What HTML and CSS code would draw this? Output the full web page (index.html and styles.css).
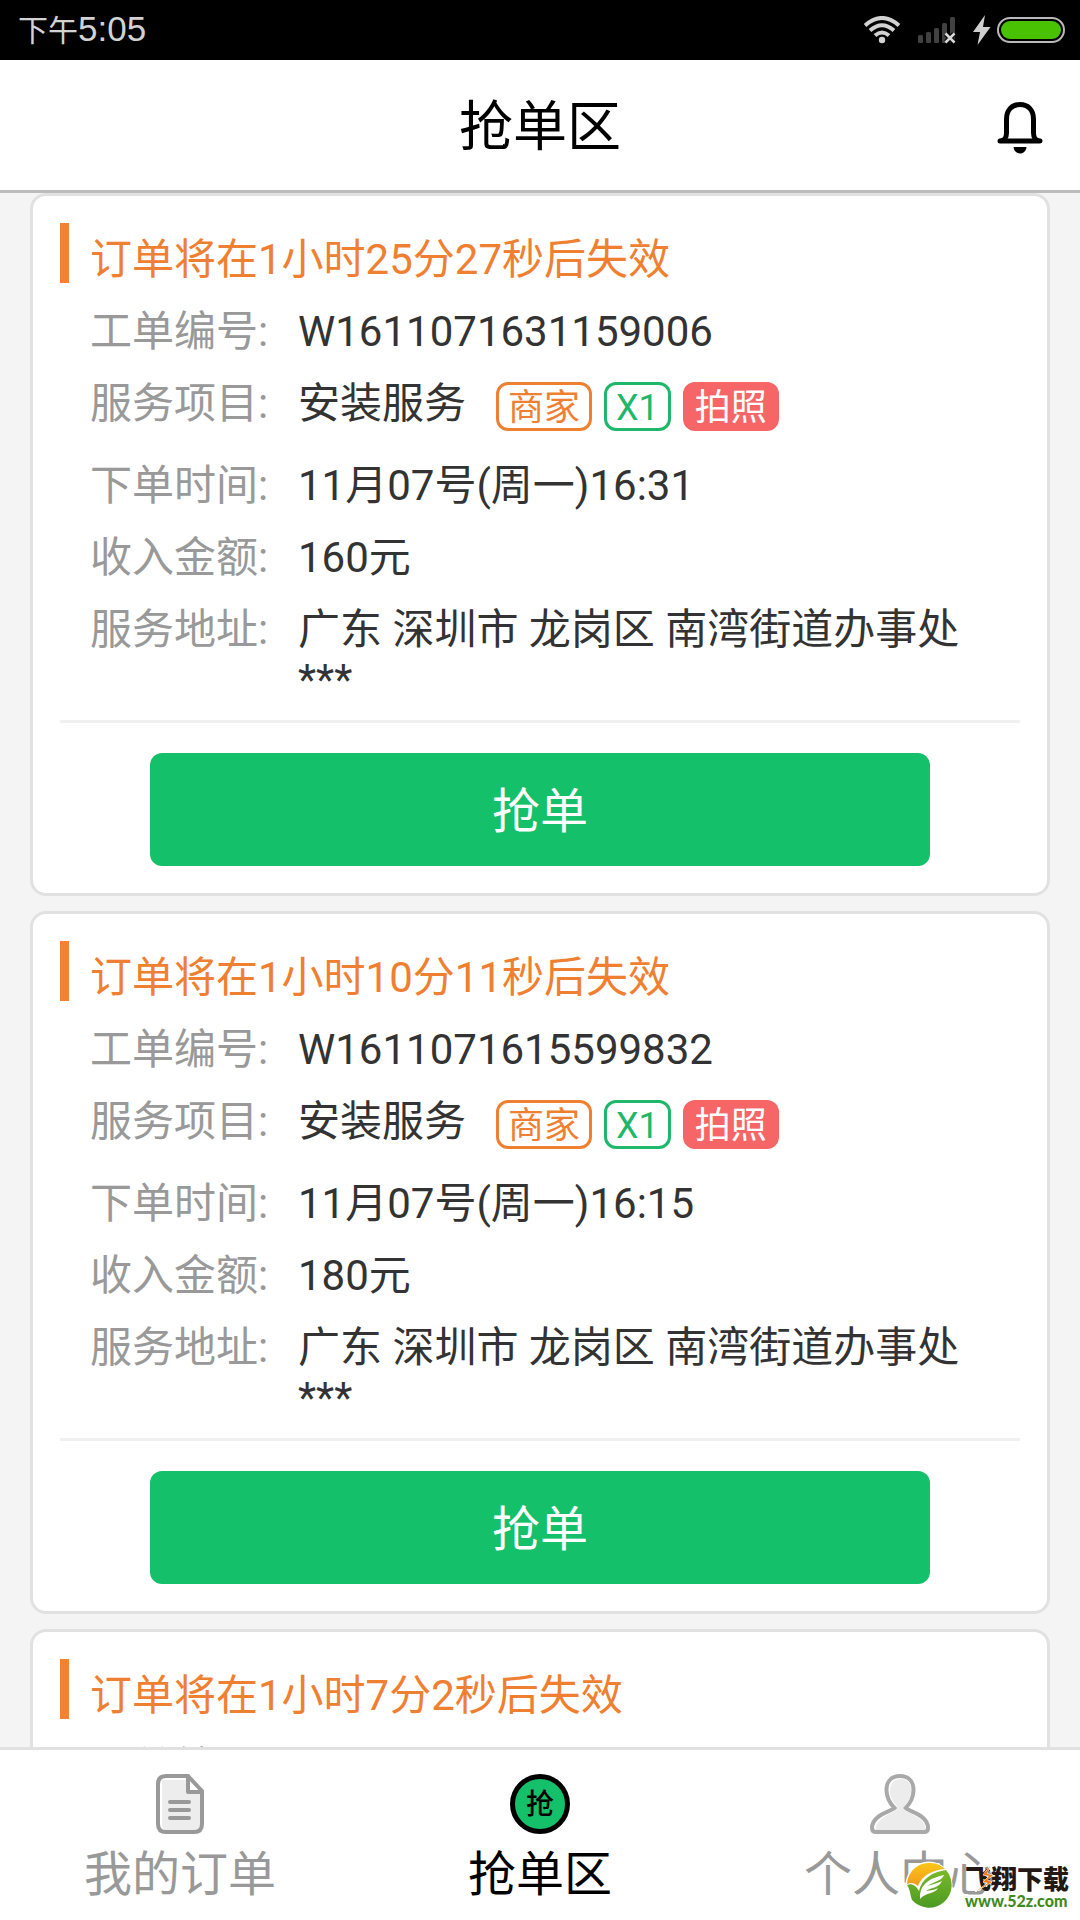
FILE: index.html
```html
<!DOCTYPE html>
<html lang="zh-CN">
<head>
<meta charset="utf-8">
<meta name="viewport" content="width=device-width, initial-scale=1">
<title>抢单区</title>
<link rel="stylesheet" href="styles.css">
</head>
<body>
<div class="app">
  <div class="status">
    <div class="status-time"><span class="status-period">下午</span>5:05</div>
    <div class="status-icons">
      <svg width="36" height="28" viewBox="0 0 36 28" fill="none" stroke="#d2d2d2" stroke-width="4">
        <path d="M1 9.500Q18 -5.500 35 9.500"/>
        <path d="M6 14.500Q18 4 30 14.500"/>
        <path d="M11 19.500Q18 13.500 25 19.500"/>
        <circle cx="18" cy="24" r="3.200" fill="#d2d2d2" stroke="none"/>
      </svg>
      <svg class="icon-signal" width="38" height="28" viewBox="0 0 38 28">
        <g fill="#414141">
          <rect x="0" y="19" width="5" height="8" rx="1.500"/>
          <rect x="8" y="16" width="5" height="11" rx="1.500"/>
          <rect x="16" y="12" width="5" height="15" rx="1.500"/>
          <rect x="24" y="7" width="5" height="20" rx="1.500"/>
          <rect x="32" y="1" width="5" height="26" rx="1.500"/>
        </g>
        <path d="M28 18l8 8M36 18l-8 8" stroke="#000" stroke-width="5"/>
        <path d="M27.500 17.500l9 9M36.500 17.500l-9 9" stroke="#d8d8d8" stroke-width="2.500"/>
      </svg>
      <svg class="icon-bolt" width="18" height="30" viewBox="0 0 18 30">
        <path d="M12 0L0 17H7L4.500 30L17.500 12H10Z" fill="#cfcfcf"/>
      </svg>
      <svg width="68" height="28" viewBox="0 0 68 28">
        <rect x="1" y="2" width="66" height="24" rx="12" fill="none" stroke="#b9b9b9" stroke-width="2"/>
        <rect x="4" y="5" width="60" height="18" rx="9" fill="#4ac204"/>
      </svg>
    </div>
  </div>

  <header class="header">
    <h1 class="header-title">抢单区</h1>
    <button class="bell" type="button" aria-label="通知">
      <svg width="46" height="52" viewBox="0 0 46 52">
        <path d="M3 39C8 38 9.500 36 9.500 31V17C9.500 8 15 2.500 23 2.500S36.500 8 36.500 17V31C36.500 36 38 38 43 39Z" fill="none" stroke="#000" stroke-width="5" stroke-linejoin="round"/>
        <path d="M16.500 45H29.500C29 49 26.500 51.500 23 51.500S17 49 16.500 45Z"/>
      </svg>
    </button>
  </header>

  <main class="list">
    <article class="card">
      <h2 class="card-title">订单将在1小时25分27秒后失效</h2>
      <dl class="fields">
        <div class="field"><dt>工单编号:</dt><dd>W1611071631159006</dd></div>
        <div class="field field-tags"><dt>服务项目:</dt><dd>安装服务</dd>
          <dd class="tags"><span class="tag tag-orange">商家</span><span class="tag tag-green">X1</span><span class="tag tag-red">拍照</span></dd></div>
        <div class="field"><dt>下单时间:</dt><dd>11月07号(周一)16:31</dd></div>
        <div class="field"><dt>收入金额:</dt><dd>160元</dd></div>
        <div class="field"><dt>服务地址:</dt><dd>广东 深圳市 龙岗区 南湾街道办事处<br>***</dd></div>
      </dl>
      <div class="card-action"><button class="grab" type="button">抢单</button></div>
    </article>

    <article class="card">
      <h2 class="card-title">订单将在1小时10分11秒后失效</h2>
      <dl class="fields">
        <div class="field"><dt>工单编号:</dt><dd>W1611071615599832</dd></div>
        <div class="field field-tags"><dt>服务项目:</dt><dd>安装服务</dd>
          <dd class="tags"><span class="tag tag-orange">商家</span><span class="tag tag-green">X1</span><span class="tag tag-red">拍照</span></dd></div>
        <div class="field"><dt>下单时间:</dt><dd>11月07号(周一)16:15</dd></div>
        <div class="field"><dt>收入金额:</dt><dd>180元</dd></div>
        <div class="field"><dt>服务地址:</dt><dd>广东 深圳市 龙岗区 南湾街道办事处<br>***</dd></div>
      </dl>
      <div class="card-action"><button class="grab" type="button">抢单</button></div>
    </article>

    <article class="card">
      <h2 class="card-title">订单将在1小时7分2秒后失效</h2>
      <dl class="fields">
        <div class="field"><dt>工单编号:</dt></div>
      </dl>
    </article>
  </main>

  <nav class="tabs">
    <a class="tab" href="#orders">
      <svg width="60" height="60" viewBox="0 0 60 60" fill="none" stroke="#999" stroke-width="4" stroke-linejoin="round" stroke-linecap="round">
        <path d="M14 2H42L52 18.500V50Q52 58 44 58H16Q8 58 8 50V10Q8 2 14 2Z" fill="#fff" stroke="none"/>
        <path d="M12 6H38V19H50V56H16Q12 56 12 50Z" fill="#ededed" stroke="none"/>
        <path d="M38 2H16Q8 2 8 10V50Q8 58 16 58H44Q52 58 52 50V17Z"/>
        <path d="M38 2V18H52"/>
        <path d="M20 28H39M20 36H39M20 44H39"/>
      </svg>
      <span>我的订单</span>
    </a>
    <a class="tab tab-active" href="#grab" aria-current="page">
      <span class="grab-icon">抢</span>
      <span>抢单区</span>
    </a>
    <a class="tab" href="#me">
      <svg width="60" height="60" viewBox="0 0 60 60">
        <path d="M30 2C21 2 16.500 8 16.500 16C16.500 23 18.500 28 24.500 34C20 38 2 41 2 54Q2 58 6 58H54Q58 58 58 54C58 41 40 38 35.500 34C41.500 28 43.500 23 43.500 16C43.500 8 39 2 30 2Z" fill="#fff" stroke="#a9a9a9" stroke-width="4"/>
        <path d="M31 5C24 5 20 10 20 17C20 24 24 28 28 34C24 40 6 42 6 56H55C57 43 38 41 33 34C39 28 41 23 41 16C41 9 38 5 31 5Z" fill="#ececec"/>
      </svg>
      <span>个人中心</span>
    </a>
    <div class="watermark">
      <svg width="48" height="48" viewBox="0 0 48 48">
        <defs>
          <linearGradient id="leaf" x1="0" y1="0" x2="0" y2="1"><stop offset="0" stop-color="#7cb928"/><stop offset="1" stop-color="#4a9a22"/></linearGradient>
          <linearGradient id="sun" x1="0" y1="0" x2="0" y2="1"><stop offset="0" stop-color="#fbc717"/><stop offset="1" stop-color="#f19a1c"/></linearGradient>
        </defs>
        <circle cx="24" cy="24" r="23.500" fill="#fff"/>
        <path d="M2 23A22.500 22.500 0 0 1 40 8C28 9 17 14 13 25C9 22 6 21 2 23Z" fill="url(#sun)"/>
        <path d="M41 9A22.500 22.500 0 1 1 7 39C5 33 5 28 2 24C7 22 11 25 14 30C17 17 28 11 41 9Z" fill="url(#leaf)"/>
        <path d="M15 36C15 22 26 17 39 14C37 20 28 21 22 25C29 23 33 22 37 20C34 27 27 26 21 30C26 29 30 29 33 27C30 33 21 31 15 38Z" fill="#fff"/>
      </svg>
      <div class="watermark-text">
        <span class="watermark-name">飞翔下载</span>
        <span class="watermark-url">www.52z.com</span>
        <svg class="watermark-flash" width="20" height="26" viewBox="0 0 20 26"><path d="M15 0L8 9L14 10L8 16L13 17L0 26L17 16L12 14L18 9L12 8Z" fill="#f47a20" stroke="#fff" stroke-width="1" paint-order="stroke"/></svg>
      </div>
    </div>
  </nav>
</div>
</body>
</html>
```
FILE: styles.css
```css
* {
  box-sizing: border-box;
}

body {
  margin: 0;
  background: #f4f4f4;
  color: #333;
  font-family: Roboto, "Noto Sans CJK SC", sans-serif;
  font-size: 42px;
  line-height: 50px;
}

h1, h2, dl, dd {
  margin: 0;
  font-weight: 400;
}

button {
  border: 0;
  padding: 0;
  font-family: inherit;
  cursor: pointer;
}

svg {
  display: block;
}

.app {
  display: flex;
  flex-direction: column;
  height: 100vh;
}

/* Status bar */
.status {
  display: flex;
  flex: none;
  align-items: center;
  justify-content: space-between;
  height: 60px;
  padding: 0 15px 0 18px;
  background: #000;
}

.status-time {
  color: #d2d2d2;
  font-family: "Liberation Sans", "Noto Sans CJK SC", sans-serif;
  font-size: 35px;
}

.status-period {
  font-size: 30px;
}

.status-icons {
  display: flex;
  align-items: center;
}

.icon-signal {
  margin-left: 18px;
}

.icon-bolt {
  margin: 0 6px 0 17px;
}

/* Header */
.header {
  display: grid;
  flex: none;
  grid-template-columns: 1fr auto 1fr;
  align-items: center;
  height: 133px;
  padding: 5px 37px 0;
  border-bottom: 3px solid #bcbcbc;
  background: #fff;
}

.header-title {
  grid-column: 2;
  color: #000;
  font-size: 54px;
  line-height: 64px;
}

.bell {
  justify-self: end;
  background: none;
}

/* Order list */
.list {
  display: flex;
  flex: 1;
  flex-direction: column;
  gap: 15px;
  min-height: 0;
  padding: 0 30px;
  overflow-y: auto;
  scrollbar-width: none;
}

.card {
  flex: none;
  padding: 27px;
  border: 3px solid #e1e1e1;
  border-radius: 16px;
  background: #fff;
}

.card-title {
  display: flex;
  gap: 21px;
  height: 62px;
  color: #f08031;
  font-size: 42px;
  line-height: 74px;
}

.card-title::before {
  content: "";
  width: 9px;
  height: 60px;
  background: #f58233;
}

.fields {
  display: flex;
  flex-direction: column;
  gap: 22px;
  padding: 22px 0 15px 30px;
}

.field {
  display: flex;
}

.field dt {
  flex: none;
  width: 208px;
  color: #999;
}

.field-tags {
  height: 60px;
}

.tags {
  display: flex;
  gap: 12px;
  padding: 3px 0 0 30px;
}

.tag {
  height: 49px;
  padding: 2px 9px 0;
  border: 3px solid;
  border-radius: 12px;
  font-size: 36px;
  line-height: 43px;
}

.tag-orange {
  color: #f08031;
}

.tag-green {
  color: #1fb86b;
}

.tag-red {
  border-color: #f66667;
  background: #f66667;
  color: #fff;
}

.card-action {
  padding: 30px 90px 0;
  border-top: 3px solid #f0f0f0;
}

.grab {
  width: 100%;
  height: 113px;
  padding-bottom: 5px;
  border-radius: 12px;
  background: #15c06a;
  color: #fff;
  font-size: 48px;
}

/* Bottom tabs */
.tabs {
  position: relative;
  display: grid;
  flex: none;
  grid-template-columns: repeat(3, 1fr);
  height: 173px;
  border-top: 3px solid #e1e1e1;
  background: #fff;
}

.tab {
  display: flex;
  flex-direction: column;
  align-items: center;
  gap: 12px;
  padding-top: 24px;
  color: #999;
  font-size: 48px;
  line-height: 58px;
  text-decoration: none;
}

.tab-active {
  color: #000;
}

.grab-icon {
  width: 60px;
  height: 60px;
  border: 5px solid #000;
  border-radius: 50%;
  background: #15c06a;
  font-size: 28px;
  font-weight: 500;
  line-height: 52px;
  text-align: center;
}

.watermark {
  position: absolute;
  right: 11px;
  bottom: 11px;
  display: flex;
  gap: 12px;
}

.watermark-text {
  position: relative;
  display: flex;
  flex-direction: column;
  padding-top: 6px;
}

.watermark-name {
  color: #231815;
  font-size: 26px;
  font-weight: 900;
  line-height: 26px;
}

.watermark-url {
  color: #3f8a1c;
  font-family: Lato, sans-serif;
  font-size: 16px;
  font-weight: 900;
  line-height: 16px;
}

.watermark-flash {
  position: absolute;
  top: 5px;
  left: 10px;
}
```
